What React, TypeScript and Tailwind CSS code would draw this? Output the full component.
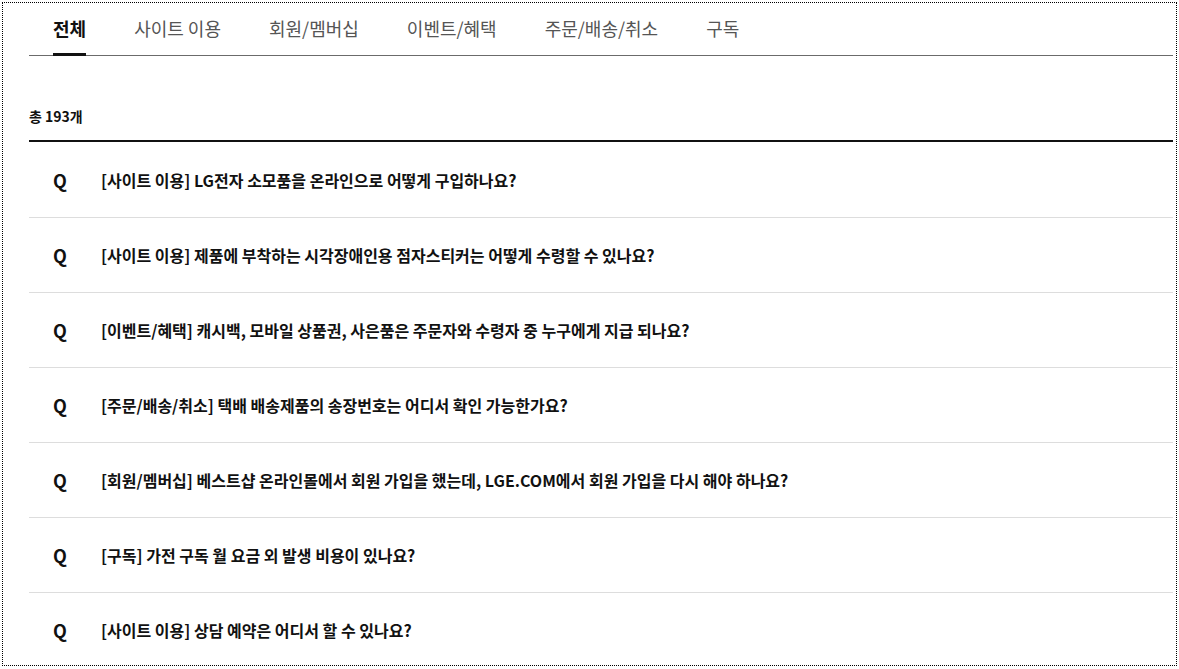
const tabs = ["전체", "사이트 이용", "회원/멤버십", "이벤트/혜택", "주문/배송/취소", "구독"];

const faqs = [
  "[사이트 이용] LG전자 소모품을 온라인으로 어떻게 구입하나요?",
  "[사이트 이용] 제품에 부착하는 시각장애인용 점자스티커는 어떻게 수령할 수 있나요?",
  "[이벤트/혜택] 캐시백, 모바일 상품권, 사은품은 주문자와 수령자 중 누구에게 지급 되나요?",
  "[주문/배송/취소] 택배 배송제품의 송장번호는 어디서 확인 가능한가요?",
  "[회원/멤버십] 베스트샵 온라인몰에서 회원 가입을 했는데, LGE.COM에서 회원 가입을 다시 해야 하나요?",
  "[구독] 가전 구독 월 요금 외 발생 비용이 있나요?",
  "[사이트 이용] 상담 예약은 어디서 할 수 있나요?",
];

export default function App() {
  return (
    <div
      className="w-[1179px] h-[669px] bg-white pt-[2px] pl-[2px]"
      style={{ fontFamily: '"Noto Sans CJK KR", "Noto Sans", sans-serif' }}
    >
      <div className="w-[1175px] h-[664px] border border-dotted border-black overflow-hidden pl-[26px] pr-[3px]">
        {/* Tabs */}
        <ul className="flex h-[53px] border-b border-[#6b6b6b]">
          {tabs.map((tab, i) => (
            <li key={tab} className="relative flex items-center px-6 pb-[2px]">
              <span
                className={
                  i === 0
                    ? "text-[18px] font-bold text-[#111]"
                    : "text-[18px] text-[#555]"
                }
              >
                {tab}
              </span>
              {i === 0 && (
                <span className="absolute left-6 right-6 -bottom-px h-[3px] bg-[#111]" />
              )}
            </li>
          ))}
        </ul>

        {/* Count */}
        <p className="mt-[50px] mb-[14px] text-[14px] leading-[20px] font-bold text-[#111]">
          총 193개
        </p>

        {/* List */}
        <ul className="border-t-2 border-[#111] pt-px">
          {faqs.map((q) => (
            <li
              key={q}
              className="flex items-center h-[75px] border-b border-[#dddddd] pl-6"
            >
              <span className="w-[48px] text-[18px] font-bold text-[#111]">Q</span>
              <span className="text-[16px] font-semibold text-[#111]">{q}</span>
            </li>
          ))}
        </ul>
      </div>
    </div>
  );
}
